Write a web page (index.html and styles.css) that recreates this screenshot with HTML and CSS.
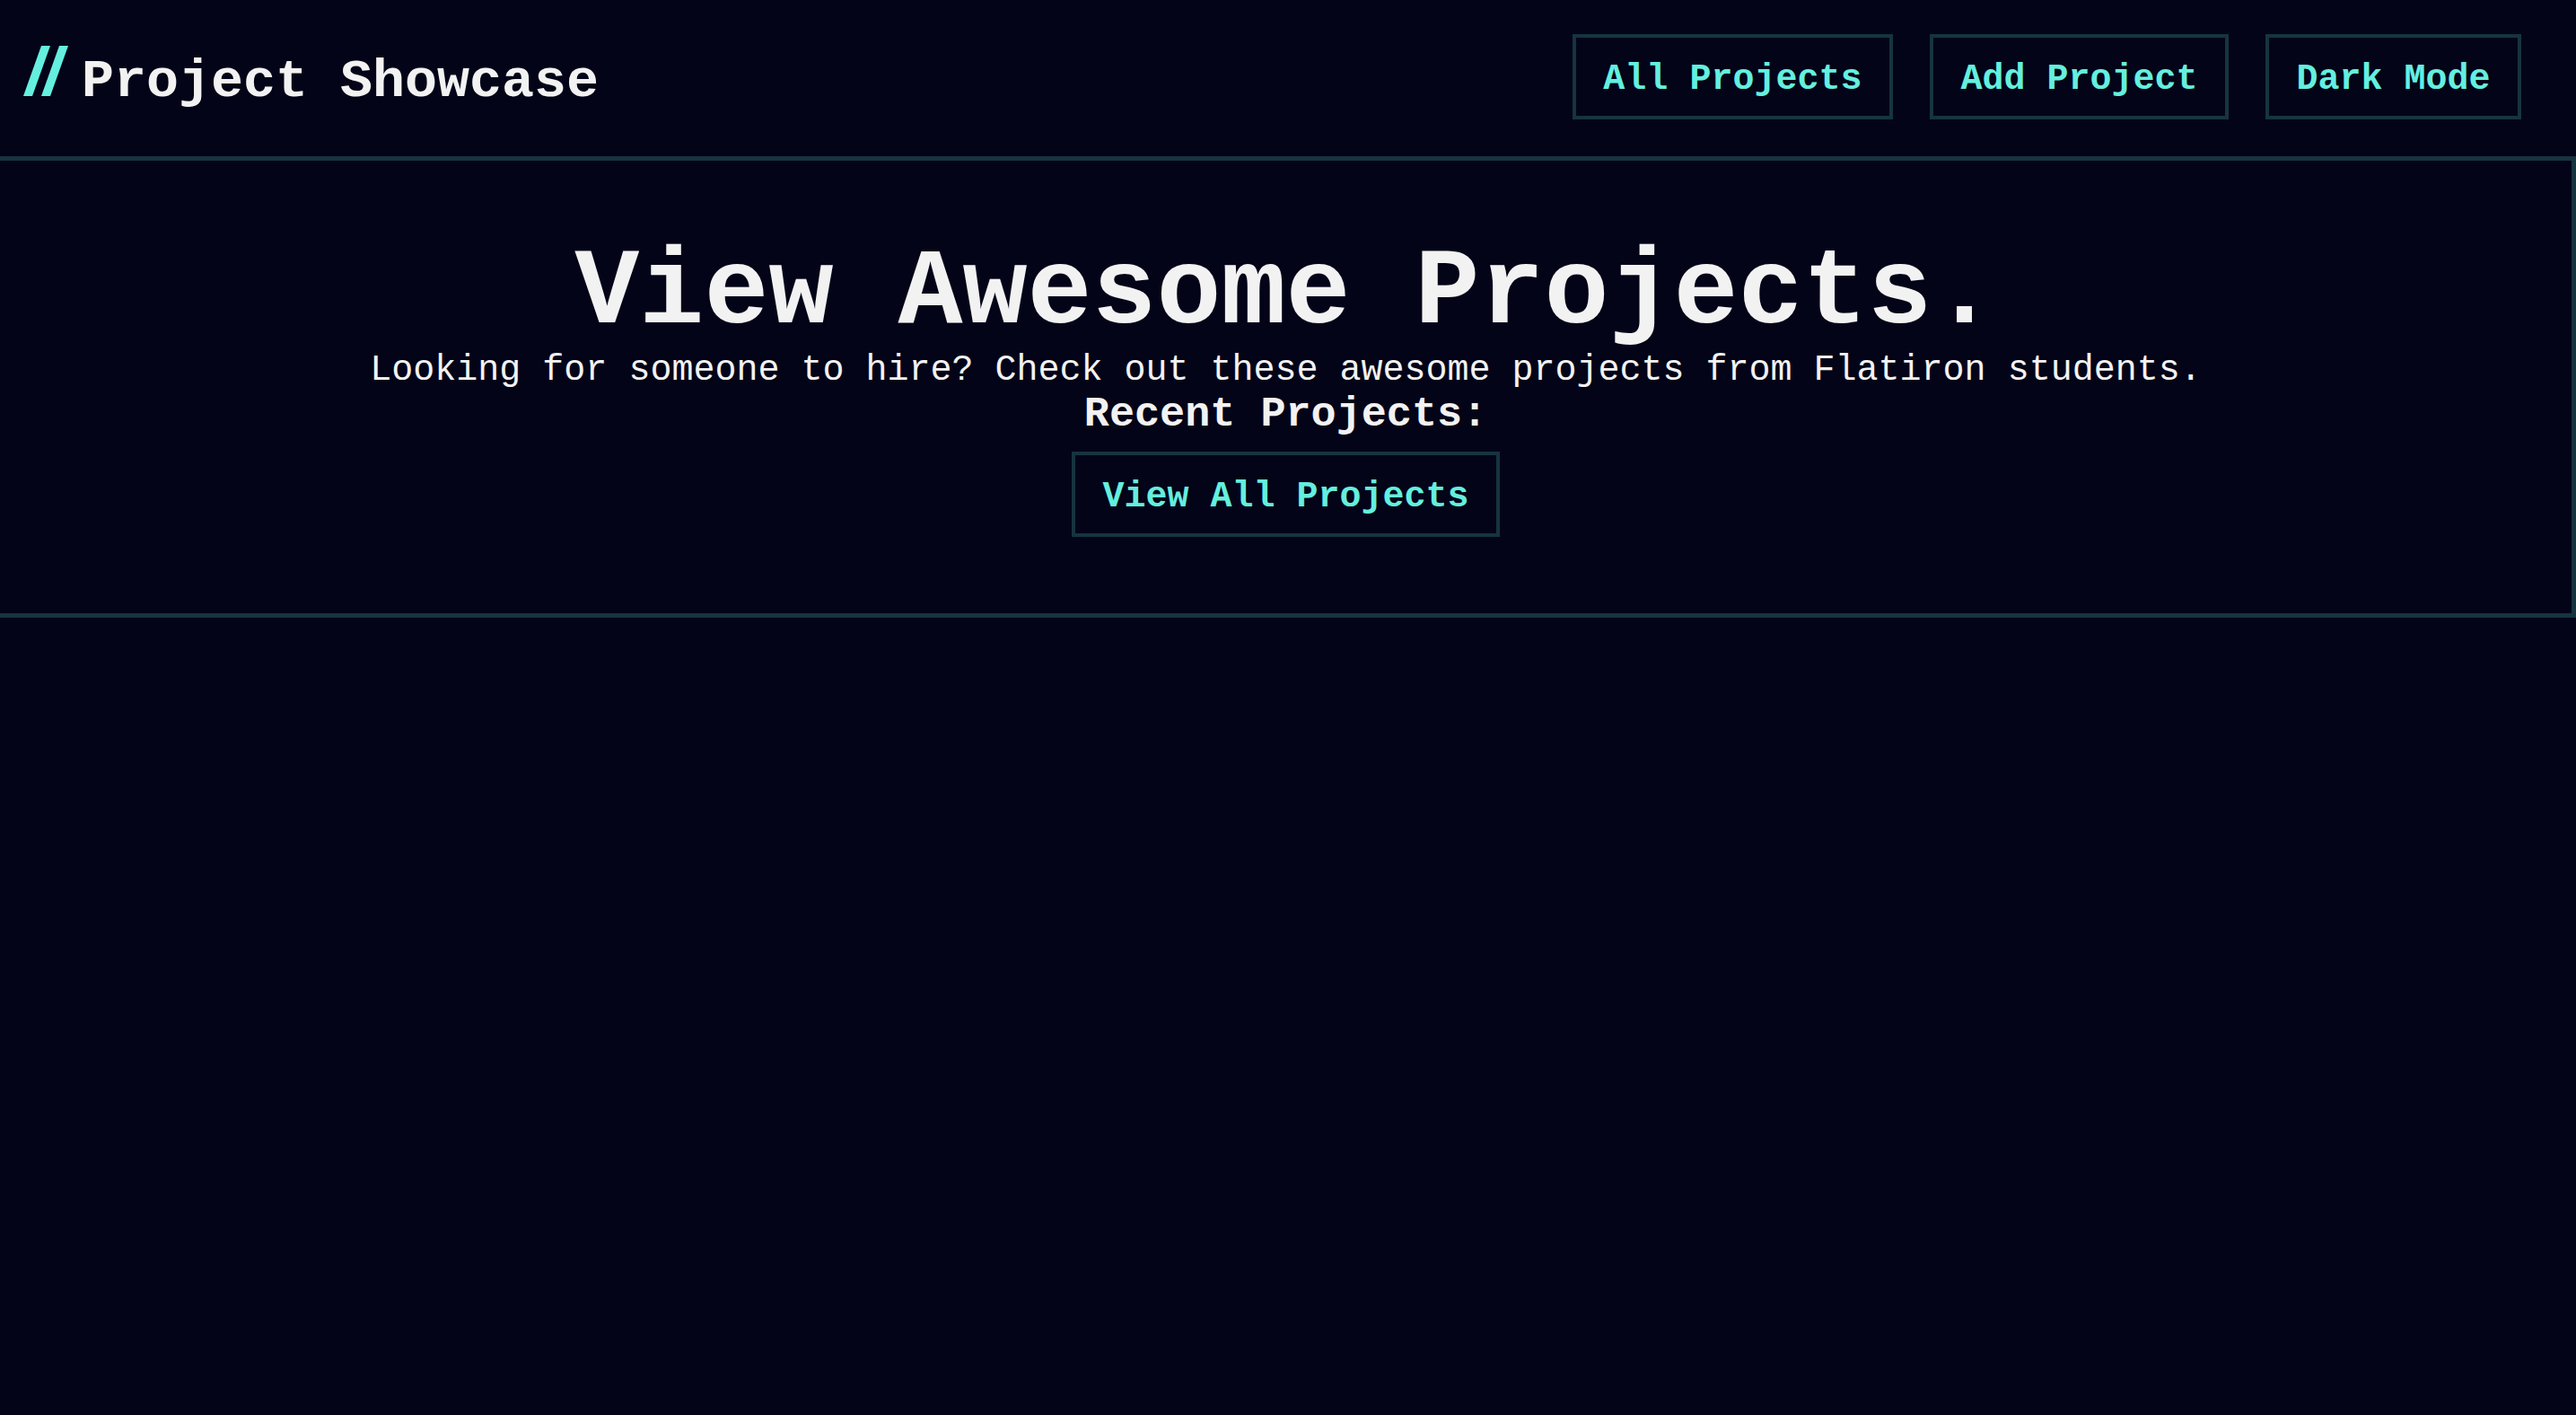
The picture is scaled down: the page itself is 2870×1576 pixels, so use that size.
FILE: index.html
```html
<!DOCTYPE html>
<html lang="en">
<head>
<meta charset="utf-8">
<title>Project Showcase</title>
<link rel="stylesheet" href="styles.css">
</head>
<body>
<header class="site-header">
  <div class="brand">
    <svg class="brand-logo" width="50" height="56" viewBox="0 0 50 56" aria-hidden="true">
      <polygon points="0,56 10,56 30,0 20,0" fill="#64efdf"/>
      <polygon points="20,56 30,56 50,0 40,0" fill="#64efdf"/>
    </svg>
    <span class="brand-name">Project Showcase</span>
  </div>
  <nav class="nav">
    <button class="btn">All Projects</button>
    <button class="btn">Add Project</button>
    <button class="btn">Dark Mode</button>
  </nav>
</header>
<main>
  <section class="hero">
    <h1 class="hero-title">View Awesome Projects.</h1>
    <p class="hero-sub">Looking for someone to hire? Check out these awesome projects from Flatiron students.</p>
    <h3 class="hero-recent">Recent Projects:</h3>
    <button class="btn hero-btn">View All Projects</button>
  </section>
</main>
</body>
</html>
```

FILE: styles.css
```css
html, body {
  margin: 0;
  padding: 0;
  background: #030418;
  color: #f2f2f2;
  font-family: "Liberation Mono", "Courier New", monospace;
}

.site-header {
  height: 174px;
  display: flex;
  justify-content: space-between;
  align-items: flex-start;
  padding: 0 61px 0 26px;
  box-sizing: border-box;
}

.brand {
  display: flex;
  align-items: flex-start;
  margin-top: 57px;
  gap: 15px;
}

.brand-logo {
  display: block;
  margin-top: -6px;
}

.brand-name {
  font-size: 60px;
  font-weight: bold;
  line-height: normal;
  color: #f2f2f2;
}

.nav {
  display: flex;
  gap: 41px;
  margin-top: 38px;
}

.btn {
  font-family: "Liberation Mono", "Courier New", monospace;
  font-size: 40px;
  font-weight: bold;
  line-height: normal;
  color: #64efdf;
  background: transparent;
  border: 4px solid #163440;
  padding: 24px 30.5px 18px;
  margin: 0;
  cursor: pointer;
}

.hero {
  border-top: 5px solid #163440;
  border-right: 5px solid #163440;
  border-bottom: 5px solid #163440;
  display: flex;
  flex-direction: column;
  align-items: center;
  text-align: center;
  padding-bottom: 85px;
}

.hero-title {
  font-size: 120px;
  font-weight: bold;
  line-height: 128px;
  margin: 84px 0 0;
}

.hero-sub {
  font-size: 40px;
  margin: -1px 0 0;
  line-height: normal;
}

.hero-recent {
  font-size: 46.8px;
  font-weight: bold;
  margin: 0;
  line-height: normal;
}

.hero-btn {
  margin-top: 15px;
}
```
